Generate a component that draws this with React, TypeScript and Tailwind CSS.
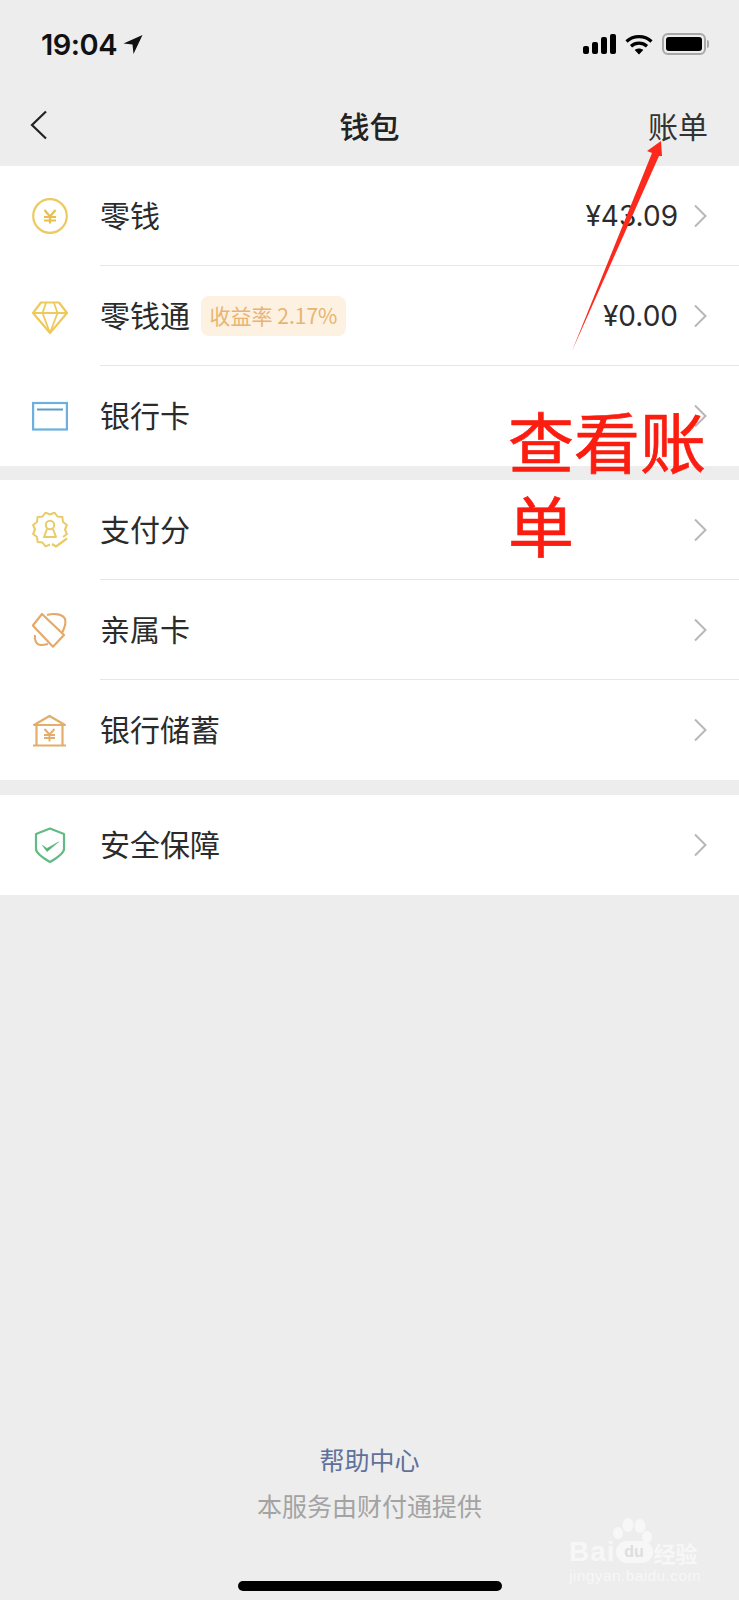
import type { ReactNode } from "react";

const cjk = "font-['Noto_Sans_CJK_SC',sans-serif]";

// spiky outline of the score badge, open at the lower right
const scorePoints = Array.from({ length: 21 }, (_, i) => {
  const angle = ((i * 15 + 90) * Math.PI) / 180;
  const r = i % 2 === 0 ? 15 : 17.500;
  return `${(18 + r * Math.cos(angle)).toFixed(1)} ${(17.500 + r * Math.sin(angle)).toFixed(1)}`;
});

function CoinIcon() {
  return (
    <svg viewBox="0 0 36 36" className="w-9 h-9" fill="none">
      <circle cx="18" cy="18" r="16.800" stroke="#ecca62" strokeWidth="2.200" />
      <path d="M12.500 12l5.500 6.500 5.500-6.500M12 19h12M12 22.500h12M18 18.500v7" stroke="#e9bf4c" strokeWidth="2.200" />
    </svg>
  );
}

function DiamondIcon() {
  return (
    <svg viewBox="0 0 36 36" className="w-9 h-9" fill="none" stroke="#eec95c" strokeWidth="2.200" strokeLinejoin="round">
      <path d="M9 4.500h18l8 10.500-17 20-17-20z" />
      <path d="M1.500 15h33M10.500 15L18 35l7.500-20M10.500 15L14 5M25.500 15L22 5" strokeWidth="1.800" />
    </svg>
  );
}

function CardIcon() {
  return (
    <svg viewBox="0 0 36 36" className="w-9 h-9" fill="none">
      <rect x="1.100" y="5" width="33.800" height="26.500" stroke="#6cb0e0" strokeWidth="2.200" />
      <path d="M5 11.500h26" stroke="#5a9cc9" strokeWidth="2" />
    </svg>
  );
}

function ScoreIcon() {
  return (
    <svg viewBox="0 0 36 36" className="w-9 h-9" fill="none" stroke="#e9cb67" strokeWidth="2" strokeLinejoin="round">
      <path d={`M${scorePoints.join("L")}`} />
      <circle cx="18" cy="13" r="4.200" />
      <path d="M15 17L12 25h12l-3-8" />
      <path d="M20 32l4 2.500 11-8" strokeWidth="2.200" />
    </svg>
  );
}

function FamilyIcon() {
  return (
    <svg viewBox="0 0 36 36" className="w-9 h-9" fill="none" stroke="#e5a968" strokeWidth="2.200" strokeLinejoin="round">
      <path d="M10 2L32 23 21 34.700 0.800 13.600z" />
      <path d="M15 3C22 1 31 2 33 7C34.500 11 32 17 30 21M3 23C2 29 5 33 9 33C11 33 14 32.500 16 32" />
    </svg>
  );
}

function BankIcon() {
  return (
    <svg viewBox="0 0 36 36" className="w-9 h-9" fill="none" stroke="#e3ad6b" strokeWidth="2.200">
      <path d="M2 13L17.500 4 33 13z" strokeLinejoin="round" />
      <path d="M4.500 14v19M30.500 14v19M1 33.500h33" />
      <path d="M12.500 17l5 5.500 5-5.500M12 23h11M12 26h11M17.500 22.500v7" strokeWidth="1.900" />
    </svg>
  );
}

function ShieldIcon() {
  return (
    <svg viewBox="0 0 36 36" className="w-9 h-9" fill="none" stroke="#62bb85" strokeLinejoin="round">
      <path d="M18 1.500l14 5.500v15c0 4-7 9-14 13-7-4-14-9-14-13V7z" strokeWidth="2.200" />
      <path d="M10.500 18.500l4.500 3L26.500 15 15 24.500z" fill="#4fae75" strokeWidth="0.800" />
    </svg>
  );
}

function Chevron() {
  return (
    <svg viewBox="0 0 14 24" className="w-[14px] h-6 shrink-0" fill="none" stroke="#b7b7b7" strokeWidth="2">
      <path d="M2 1.500L12.500 12 2 22.500" />
    </svg>
  );
}

type RowProps = {
  icon: ReactNode;
  label: string;
  value?: string;
  badge?: string;
  last?: boolean;
};

function Row({ icon, label, value, badge, last }: RowProps) {
  return (
    <div className="flex items-center h-[100px] pl-8 bg-white">
      <div className="w-9 h-9 shrink-0">{icon}</div>
      <div className={`flex items-center flex-1 h-full ml-8 pr-8 ${last ? "" : "border-b border-[#e6e6e6]"}`}>
        <span className="mb-1 text-[30px] leading-none text-[#2b2b2b]">{label}</span>
        {badge && (
          <span className="ml-[11px] w-[145px] h-10 flex items-center justify-center rounded-lg bg-[#fdf1e2] text-[21px] text-[#e9b471]">
            {badge}
          </span>
        )}
        {value && <span className="ml-auto text-[28px] leading-none text-[#2b2b2b] font-['Inter',sans-serif]">{value}</span>}
        <div className={value ? "ml-[15px]" : "ml-auto"}>
          <Chevron />
        </div>
      </div>
    </div>
  );
}

function StatusBar() {
  return (
    <div className="flex items-center justify-between h-[88px] pl-[41px] pr-[30px]">
      <div className="flex items-center gap-[6px]">
        <span className="text-[29px] leading-none font-semibold text-[#111] font-['Inter',sans-serif] tracking-[-0.5px]">19:04</span>
        <svg viewBox="0 0 20 20" className="w-5 h-5" fill="#111">
          <path d="M19.500 1L0.500 9.500l9 1L10.500 20z" />
        </svg>
      </div>
      <div className="flex items-center gap-[9px]">
        <div className="flex items-end gap-[2.500px] h-5">
          <div className="w-[6.500px] h-2 rounded-[2px] bg-black" />
          <div className="w-[6.500px] h-3 rounded-[2px] bg-black" />
          <div className="w-[6.500px] h-[17px] rounded-[2px] bg-black" />
          <div className="w-[6.500px] h-5 rounded-[2px] bg-black" />
        </div>
        <svg viewBox="0 0 28 21" className="w-7 h-[21px]" fill="none" stroke="#000" strokeWidth="3.200">
          <path d="M1.500 7.500c7-6.500 18-6.500 25 0M6 12.200c4.500-4 11.500-4 16 0" />
          <path d="M14 20.500l-4.300-4.500c2.500-2 6.100-2 8.600 0z" fill="#000" stroke="none" />
        </svg>
        <div className="flex items-center">
          <div className="w-[44px] h-[22px] rounded-[6px] border-2 border-[#a8a8a8] p-[2px]">
            <div className="w-full h-full rounded-[3px] bg-black" />
          </div>
          <div className="w-[2px] h-2 rounded-r-sm bg-[#a8a8a8] ml-[1px]" />
        </div>
      </div>
    </div>
  );
}

function NavBar() {
  return (
    <div className="relative flex items-center justify-between h-[78px] pb-1 pl-[30px] pr-[31px]">
      <svg viewBox="0 0 18 30" className="w-[18px] h-[30px]" fill="none" stroke="#222" strokeWidth="2.200">
        <path d="M16 1.500L2 15l14 13.500" />
      </svg>
      <span className="absolute left-0 right-0 text-center text-[30px] font-medium leading-none text-[#222]">钱包</span>
      <span className="text-[30px] leading-none text-[#333]">账单</span>
    </div>
  );
}

function Watermark() {
  return (
    <div className="absolute left-[569px] top-[1542px] w-[132px] text-[#f7f7f7]">
      <div className="flex items-center h-5">
        <span className="text-[28px] tracking-[1px] font-bold leading-none font-['Liberation_Sans',sans-serif]">Bai</span>
        <span className="relative flex items-center justify-center w-[37px] h-[22px] rounded-full bg-[#f7f7f7] text-[16px] font-bold text-[#dedede] font-['Liberation_Sans',sans-serif]">
          du
          <svg viewBox="0 0 38 26" className="absolute -top-[23px] left-0 w-[38px] h-[26px] overflow-visible" fill="#f7f7f7">
            <ellipse cx="2" cy="15" rx="5" ry="6" />
            <ellipse cx="12" cy="7" rx="5.500" ry="7" />
            <ellipse cx="24" cy="8" rx="5.500" ry="7" />
            <ellipse cx="31" cy="19" rx="5" ry="6" />
          </svg>
        </span>
        <span className="ml-[1px] text-[22px] font-bold leading-none whitespace-nowrap">经验</span>
      </div>
      <div className="mt-[6px] text-[15.500px] leading-none tracking-[0.4px] font-['Liberation_Sans',sans-serif] whitespace-nowrap">jingyan.baidu.com</div>
    </div>
  );
}

export default function App() {
  return (
    <div className={`relative flex flex-col w-[739px] h-[1600px] overflow-hidden bg-[#ededed] ${cjk}`}>
      <StatusBar />
      <NavBar />

      <div>
        <Row icon={<CoinIcon />} label="零钱" value="¥43.09" />
        <Row icon={<DiamondIcon />} label="零钱通" badge="收益率 2.17%" value="¥0.00" />
        <Row icon={<CardIcon />} label="银行卡" last />
      </div>
      <div className="mt-[14px]">
        <Row icon={<ScoreIcon />} label="支付分" />
        <Row icon={<FamilyIcon />} label="亲属卡" />
        <Row icon={<BankIcon />} label="银行储蓄" last />
      </div>
      <div className="mt-[15px]">
        <Row icon={<ShieldIcon />} label="安全保障" last />
      </div>

      <div className="mt-auto flex flex-col items-center">
        <span className="text-[25px] leading-none text-[#5f7199]">帮助中心</span>
        <span className="mt-[21px] text-[25px] leading-none text-[#a3a3a3]">本服务由财付通提供</span>
        <div className="mt-[63px] mb-[9px] w-[264px] h-[10px] rounded-full bg-black" />
      </div>

      {/* annotation drawn on top of the screenshot */}
      <svg viewBox="0 0 739 1600" className="absolute inset-0 w-[739px] h-[1600px] pointer-events-none">
        <polygon points="661,141 647,151 652,153 572,351 659,156 662,156" fill="#fb2a1c" />
      </svg>
      <div className="absolute left-[508px] top-[397px] w-[200px] text-[66px] leading-[84px] font-normal text-[#fb1d0f] [-webkit-text-stroke:0.7px_#fb1d0f]">查看账单</div>
      <Watermark />
    </div>
  );
}
